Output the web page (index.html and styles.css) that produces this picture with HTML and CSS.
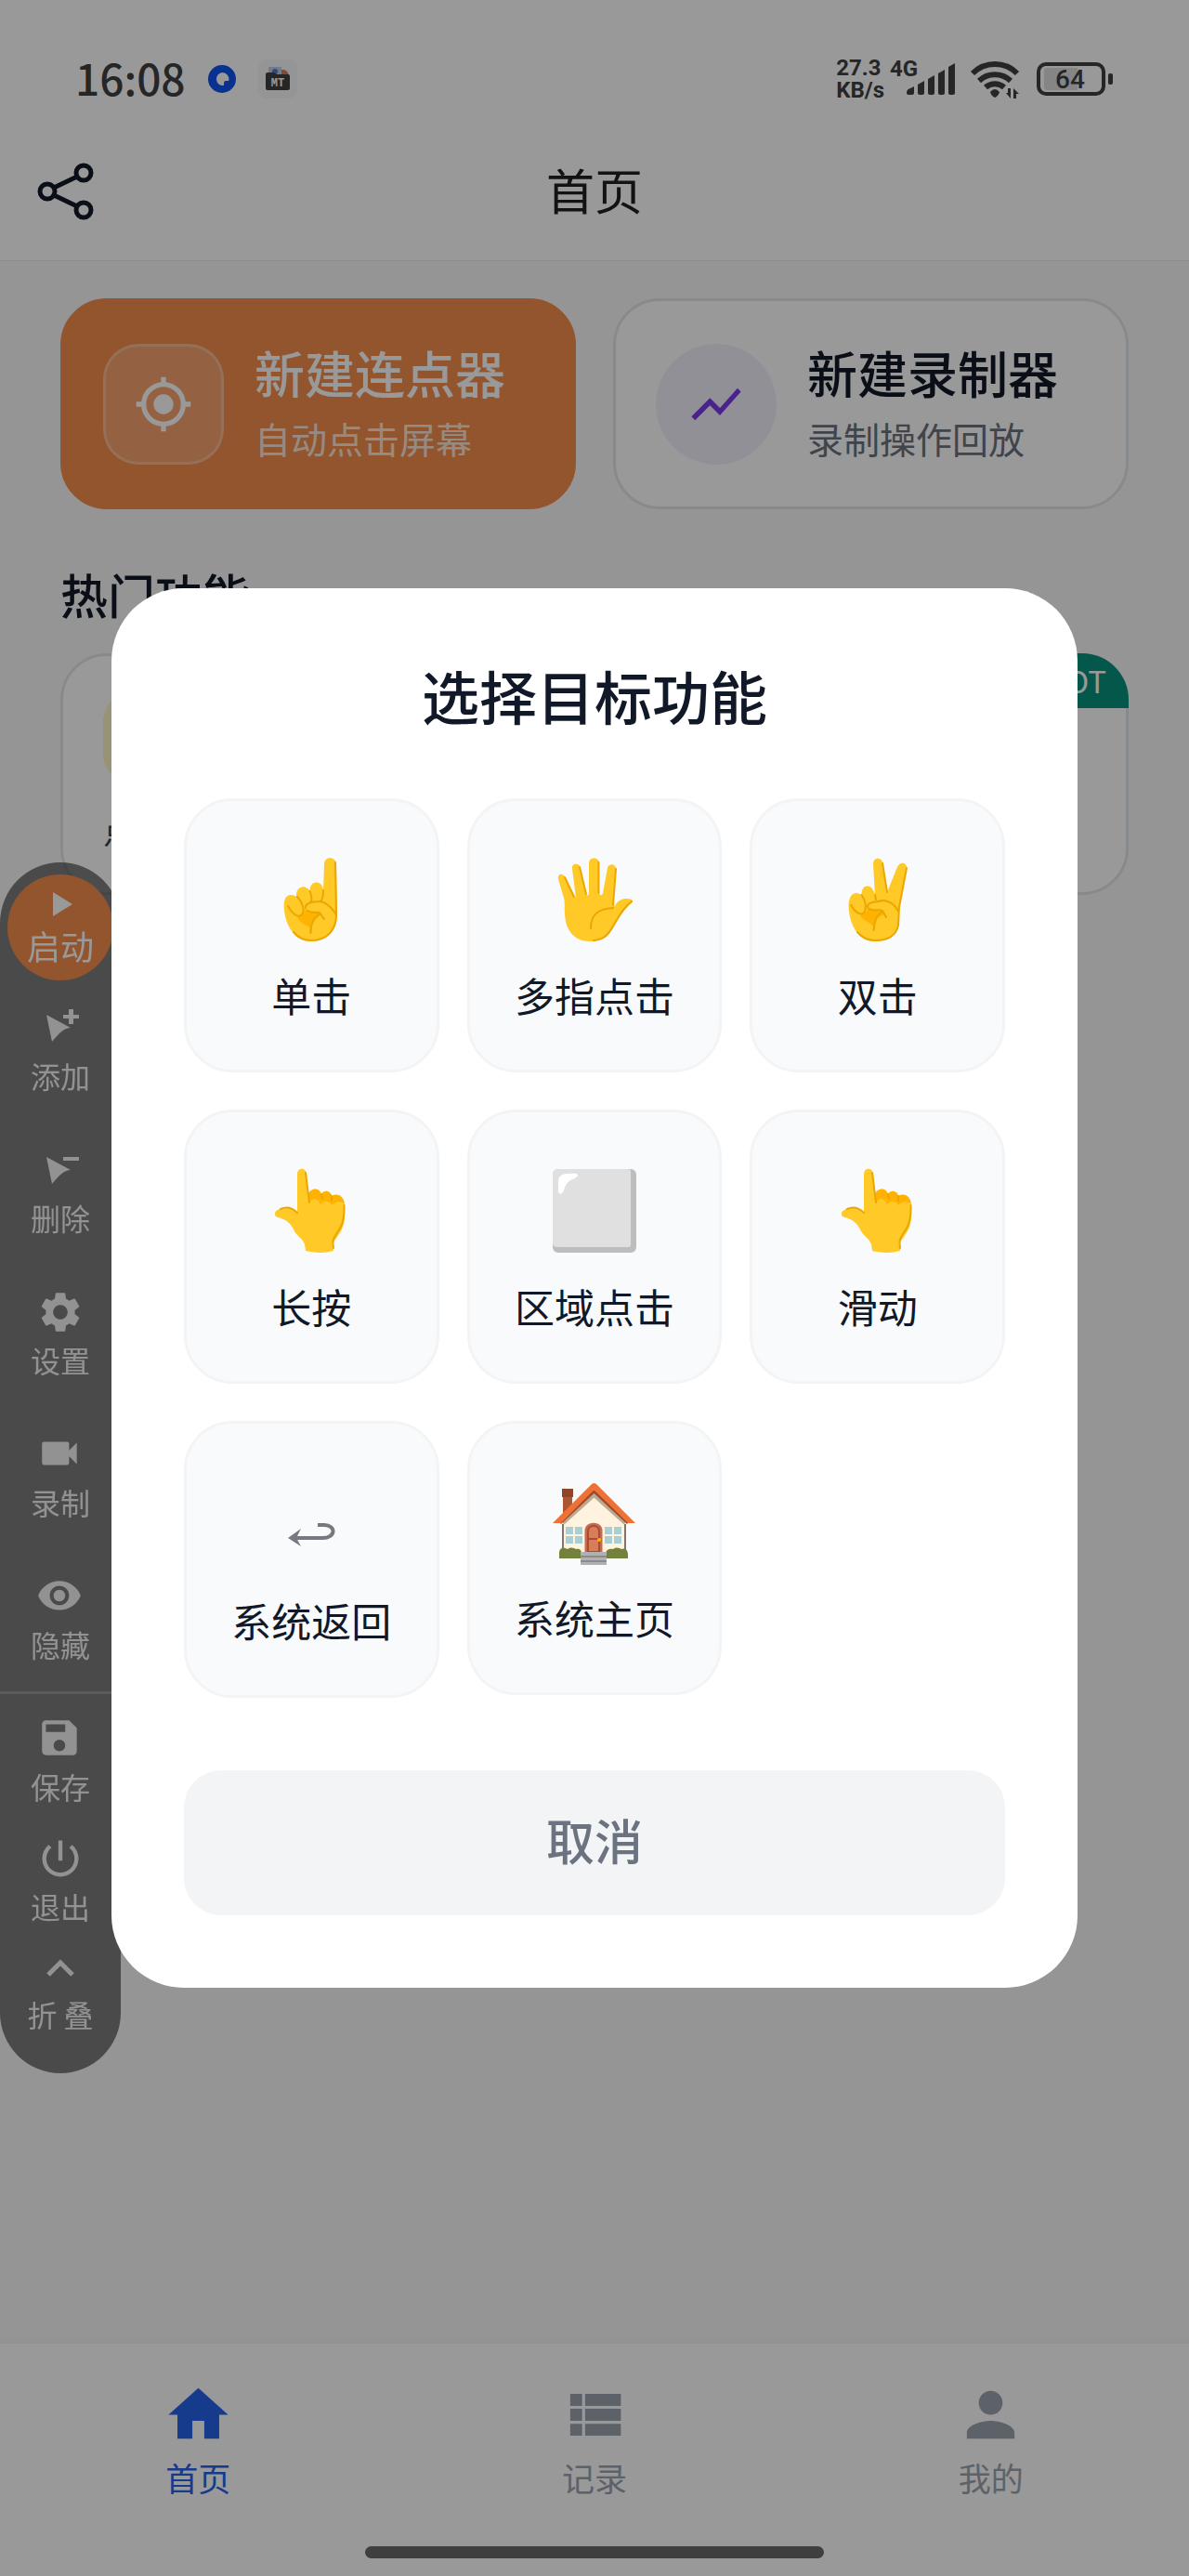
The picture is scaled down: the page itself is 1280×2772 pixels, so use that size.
FILE: index.html
```html
<!DOCTYPE html>
<html lang="zh-CN">

<head>
	<meta charset="utf-8">
	<meta name="viewport" content="width=device-width, initial-scale=1">
	<title>首页</title>
	<link rel="stylesheet" href="styles.css">
</head>

<body>
	<!-- shared drawings -->
	<svg class="sprite" width="0" height="0" aria-hidden="true">
		<symbol id="hand-up" viewBox="0 0 96 96">
			<path fill="#ffc928" d="M33 50V9C33 1 42 1 43 8L46 39C50 33 56 35 58 39C61 35 68 36 70 40C75 37 82 38 84 42V54C84 68 76 75 72 82L72 91C62 94 50 93 42 91L41 84C39 78 33 75 30 70C26 61 21 57 12 55C7 53 8 48 14 46C22 43 28 45 33 50Z" />
			<path fill="#ffb300" d="M46 39L45 31C46 23 57 22 59 30C62 24 70 27 70 32C77 28 84 33 84 42C82 38 75 37 70 42C67 36 61 37 58 41C55 34 49 34 46 40Z" />
			<path fill="none" stroke="#eba600" stroke-width="2" stroke-linecap="round" d="M42 7L46 39M15 46C22 43 28 45 33 50M83.500 42C84 60 80 66 75 73C71 79 71 81 72 88M59 30L60 35M70 32L70 37" />
		</symbol>
		<symbol id="pointer" viewBox="0 0 52 52">
			<path fill="currentColor" d="M11 12L37 26C31 26 25 31 17 41Z" />
		</symbol>
	</svg>

	<div class="page">
		<header class="header">
			<div class="status-bar">
				<div class="status-left">
					<span class="clock">16:08</span>
					<svg width="30" height="30" viewBox="0 0 30 30">
						<circle cx="15" cy="15" r="15" fill="#0f52f0" />
						<path fill="#fff" d="M15 8A7.500 7.500 0 0 1 22.500 16L22 17H19Q17 17 17 20V22A7 7 0 1 1 15 8Z" />
					</svg>
					<svg width="42" height="42" viewBox="0 0 42 42">
						<rect width="42" height="42" rx="9" fill="#f7f9fb" />
						<path fill="#c3cedc" d="M11 8h14v10H11z" />
						<circle cx="18" cy="13" r="3" fill="#5878ce" />
						<path fill="#dd7a50" d="M25 11q7-1 8 7h-8z" />
						<path fill="#404040" d="M8 16q0-2 2-2h7l3 2h12q2 0 2 2v13q0 2-2 2H10q-2 0-2-2z" />
						<text x="21" y="29" text-anchor="middle" class="app-mark">MT</text>
					</svg>
				</div>
				<div class="status-right">
					<div class="network">
						<div class="speed">
							<span>27.3</span>
							<span>KB/s</span>
						</div>
						<svg width="70" height="42" viewBox="0 0 70 42">
							<text x="0" y="18" class="net-type">4G</text>
							<path fill="#404040" d="M18 36q0-4 4-5l4-2v7q0 2-2 2h-4q-2 0-2-2zM30 27l7-4v13q0 2-2 2h-3q-2 0-2-2zM41 21l7-4v19q0 2-2 2h-3q-2 0-2-2zM52 15l7-4v25q0 2-2 2h-3q-2 0-2-2zM63 8l7-4v32q0 2-2 2h-3q-2 0-2-2z" />
						</svg>
					</div>
					<svg width="56" height="42" viewBox="0 0 56 42">
						<g fill="none" stroke="#404040" stroke-width="6">
							<path d="M3 15A34 34 0 0 1 51 15" />
							<path d="M10 23A25 25 0 0 1 44 23" />
							<path d="M17 30A15 15 0 0 1 37 30" />
						</g>
						<path fill="#404040" d="M22 35q5-6 10 0q-1 4-5 6q-4-2-5-6zM41 31h3v11l-5-6h2zM47 42V31l6 6h-3v5z" />
					</svg>
					<svg width="82" height="36" viewBox="0 0 82 36">
						<rect x="2" y="2" width="70" height="32" rx="8" fill="none" stroke="#404040" stroke-width="4" />
						<path fill="#dedede" d="M11 6H44V30H11q-3 0-3-3V9q0-3 3-3z" />
						<rect x="77" y="12" width="5" height="12" rx="2" fill="#404040" />
						<text x="36" y="28" text-anchor="middle" class="battery-level">64</text>
					</svg>
				</div>
			</div>
			<div class="nav-bar">
				<button class="share-button" aria-label="分享">
					<svg width="64" height="64" viewBox="0 0 64 64" fill="none" stroke="#111827" stroke-width="5">
						<circle cx="12" cy="32" r="8" />
						<circle cx="51" cy="12" r="8" />
						<circle cx="51" cy="52" r="8" />
						<path d="M19 28L44 16M19 36L44 48" />
					</svg>
				</button>
				<h1>首页</h1>
			</div>
		</header>

		<main class="content">
			<div class="create-row">
				<button class="create-card primary">
					<span class="create-icon">
						<svg width="64" height="64" viewBox="0 0 24 24" fill="#fff">
							<circle cx="12" cy="12" r="4" />
							<path d="M20.940 11A9 9 0 0 0 13 3.060V1h-2v2.060A9 9 0 0 0 3.060 11H1v2h2.060A9 9 0 0 0 11 20.940V23h2v-2.060A9 9 0 0 0 20.940 13H23v-2zM12 19a7 7 0 1 1 0-14 7 7 0 0 1 0 14z" />
						</svg>
					</span>
					<span class="create-text">
						<span class="create-title">新建连点器</span>
						<span class="create-desc">自动点击屏幕</span>
					</span>
				</button>
				<button class="create-card">
					<span class="create-icon">
						<svg width="64" height="64" viewBox="0 0 24 24" fill="#7c3aed">
							<path d="M3.500 18.490l6-6.010 4 4L22 6.920l-1.410-1.410-7.090 7.970-4-4L2 16.990z" />
						</svg>
					</span>
					<span class="create-text">
						<span class="create-title">新建录制器</span>
						<span class="create-desc">录制操作回放</span>
					</span>
				</button>
			</div>

			<h2>热门功能</h2>
			<div class="hot-row">
				<div class="hot-card">
					<div class="hot-icon"></div>
					<div class="hot-name">点赞</div>
				</div>
				<div class="hot-card">
					<span class="hot-badge">HOT</span>
				</div>
			</div>
		</main>

		<nav class="tab-bar">
			<div class="tabs">
				<a href="#home" class="tab active">
					<svg width="77" height="77" viewBox="0 0 24 24" fill="currentColor"><path d="M10 20v-6h4v6h5v-8h3L12 3 2 12h3v8z" /></svg>
					首页
				</a>
				<a href="#records" class="tab">
					<svg width="77" height="77" viewBox="0 0 24 24" fill="currentColor"><path d="M4 14h4v-4H4v4zm0 5h4v-4H4v4zM4 9h4V5H4v4zm5 5h12v-4H9v4zm0 5h12v-4H9v4zM9 5v4h12V5H9z" /></svg>
					记录
				</a>
				<a href="#mine" class="tab">
					<svg width="77" height="77" viewBox="0 0 24 24" fill="currentColor"><path d="M12 12c2.210 0 4-1.790 4-4s-1.790-4-4-4-4 1.790-4 4 1.790 4 4 4zm0 2c-2.670 0-8 1.340-8 4v2h16v-2c0-2.660-5.330-4-8-4z" /></svg>
					我的
				</a>
			</div>
			<div class="home-indicator"></div>
		</nav>
	</div>

	<!-- floating toolbar -->
	<aside class="toolbar">
		<button class="start-button">
			<svg width="40" height="32" viewBox="0 0 40 32"><path fill="#fff" d="M12 3L33 16L12 29Z" /></svg>
			启动
		</button>
		<div class="tool-group">
			<button class="tool">
				<svg width="52" height="52"><use href="#pointer" /><path fill="currentColor" d="M35 6h5v6h6v4h-6v6h-5v-6h-6v-4h6z" /></svg>
				添加
			</button>
			<button class="tool">
				<svg width="52" height="52"><use href="#pointer" /><path fill="currentColor" d="M29 12h17v4H29z" /></svg>
				删除
			</button>
			<button class="tool">
				<svg width="52" height="52" viewBox="0 0 24 24" fill="currentColor"><path d="M19.140 12.940c.04-.3.06-.61.06-.94 0-.32-.02-.64-.07-.94l2.030-1.580c.18-.14.23-.41.12-.61l-1.920-3.320c-.12-.22-.37-.29-.59-.22l-2.390.96c-.5-.38-1.030-.7-1.620-.94l-.36-2.540c-.04-.24-.24-.41-.48-.41h-3.840c-.24 0-.43.17-.47.41l-.36 2.540c-.59.24-1.130.57-1.620.94l-2.390-.96c-.22-.08-.47 0-.59.22L2.740 8.870c-.12.21-.08.47.12.61l2.030 1.580c-.05.3-.09.63-.09.94s.02.64.07.94l-2.030 1.580c-.18.14-.23.41-.12.61l1.920 3.320c.12.22.37.29.59.22l2.390-.96c.5.38 1.030.7 1.620.94l.36 2.540c.05.24.24.41.48.41h3.840c.24 0 .44-.17.47-.41l.36-2.540c.59-.24 1.130-.56 1.620-.94l2.390.96c.22.08.47 0 .59-.22l1.920-3.320c.12-.22.07-.47-.12-.61l-2.010-1.580zM12 15.600c-1.980 0-3.600-1.620-3.600-3.600s1.620-3.600 3.600-3.600 3.600 1.620 3.600 3.600-1.620 3.600-3.600 3.600z" /></svg>
				设置
			</button>
			<button class="tool">
				<svg width="52" height="52" viewBox="0 0 25 25" fill="currentColor"><path d="M17 10.500V7c0-.55-.45-1-1-1H4c-.55 0-1 .45-1 1v10c0 .55.45 1 1 1h12c.55 0 1-.45 1-1v-3.500l4 4v-11l-4 4z" /></svg>
				录制
			</button>
			<button class="tool">
				<svg width="52" height="52" viewBox="0 0 25 25" fill="currentColor"><path d="M12 4.500C7 4.500 2.730 7.610 1 12c1.730 4.390 6 7.500 11 7.500s9.270-3.110 11-7.500c-1.730-4.390-6-7.500-11-7.500zM12 17c-2.760 0-5-2.240-5-5s2.240-5 5-5 5 2.240 5 5-2.240 5-5 5zm0-8c-1.660 0-3 1.340-3 3s1.340 3 3 3 3-1.340 3-3-1.340-3-3-3z" /></svg>
				隐藏
			</button>
		</div>
		<div class="tool-group compact">
			<button class="tool">
				<svg width="52" height="52" viewBox="0 0 25 25" fill="currentColor"><path fill-rule="evenodd" d="M17 3H5a2 2 0 0 0-2 2v14c0 1.100.9 2 2 2h14a2 2 0 0 0 2-2V7l-4-4zM12 19a3 3 0 1 1 0-6 3 3 0 0 1 0 6zM15 9H5V5h10z" /></svg>
				保存
			</button>
			<button class="tool">
				<svg width="52" height="52" viewBox="0 0 24 24" fill="currentColor"><path d="M13 3h-2v10h2V3zm4.830 2.170l-1.420 1.420A6.920 6.920 0 0 1 19 12c0 3.870-3.130 7-7 7s-7-3.130-7-7c0-2.190 1.010-4.140 2.580-5.420L6.170 5.170A8.930 8.930 0 0 0 3 12a9 9 0 0 0 18 0c0-2.740-1.230-5.180-3.170-6.830z" /></svg>
				退出
			</button>
			<button class="tool fold">
				<svg width="52" height="52" viewBox="0 0 52 52" fill="none" stroke="currentColor" stroke-width="5"><path d="M13 35L26 22L39 35" /></svg>
				折 叠
			</button>
		</div>
	</aside>

	<!-- target picker -->
	<div class="overlay">
		<div class="dialog" role="dialog" aria-modal="true" aria-labelledby="dialog-title">
			<h2 id="dialog-title" class="dialog-title">选择目标功能</h2>
			<div class="options">
				<button class="option">
					<svg width="96" height="96" viewBox="0 0 96 96">
						<path fill="#ffc928" d="M61 40L62 10C62 1 74.500 1 75 10L76 64C76 82 65 93 48 93C28 93 18.700 72 18.700 54C18.700 42 27 41 32 45C31 33 43 31 46.500 39C46 27 60 26 61 38Z" />
						<path fill="#ffb300" d="M33 67C41 64 42 60 42 57C46 62 52 62 58 62L60 64C52 67 49 71 47.500 79C43 75 36 74 33 67Z" />
						<path fill="none" stroke="#eba600" stroke-width="2" stroke-linecap="round" stroke-linejoin="round" d="M23 55C27 62 33 69 38 64C42 60 38 50 33 45M46.500 39C49 44 49 50 47 51M61 38C61 44 60 48 58.500 49M42 57C41 51 52 50 59 50C67 53 73 60 75 65M44 60C49 63 53 61 57 62L62 69M57 64C51 67 47 75 47.500 84M74 8L75 64C75 81 65 92 48 92C40 92 34 89 29 83" />
					</svg>
					单击
				</button>
				<button class="option">
					<svg width="96" height="96" viewBox="0 0 96 96">
						<path fill="#ffc928" d="M9 26C8 20 14 19 16 24L26 45C28 46 28 45 27.500 42L24 15C23 9 31 8 32.500 13L39 42C40 44 42 44 42 41V9C42 2 52 2 53 8V41C54 44 56 44 57 41L62 14C63 9 71 9 71 15L68 51C68 55 69 57 71 53C75 47 83 46 88 48C90 50 88 52 85 54C76 61 72 72 65 83C60 91 53 93 43 93C27 93 18 82 16.500 68C15 58 17 50 14 43Z" />
						<path fill="none" stroke="#eba600" stroke-width="2" stroke-linecap="round" d="M68 57C51 58 44 65 44 79M16 24L26 45M32 13L39 42M52.500 8V41M71 15L68 54M88 50C79 57 75 65 69 75C62 88 56 91 47 92" />
					</svg>
					多指点击
				</button>
				<button class="option">
					<svg width="96" height="96" viewBox="0 0 96 96">
						<path fill="#ffc928" d="M45 43L43 10C43 2 52 2 53.500 9L58 40L69 13C72 6 80 8 79 15L71 56L70 76C67 89 57 93 45 93C26 93 16.600 73 16.600 54C17 40 25 39 30.500 43C30 31 42 30 45 43Z" />
						<path fill="#ffb300" d="M29 65C37 63 38 57 37 55C42 60 48 58 52 60L55 64C48 66 45 70 44 78C40 72 32 71 29 65Z" />
						<path fill="none" stroke="#eba600" stroke-width="2" stroke-linecap="round" stroke-linejoin="round" d="M19 54C23 61 30 67 34 61C36 55 34 48 30.500 43M45 43L46 48M37 56C36 50 47 51 53 49C61 49 68 55 70 61M38 58C43 61 49 58 53 60L57 67M53 61C46 65 44 72 43.500 81M53 9L58 40M79 14L71 56L70 76C67 89 57 92 45 92C37 92 31 89 26 83" />
					</svg>
					双击
				</button>
				<button class="option">
					<svg width="96" height="96"><use href="#hand-up" /></svg>
					长按
				</button>
				<button class="option">
					<svg width="96" height="96" viewBox="0 0 96 96">
						<rect x="3" y="3" width="90" height="90" rx="6" fill="#bdbdbd" />
						<path fill="#e0e0e0" d="M9 3H84q3 0 3 3V84q0 3-3 3H9q-6 0-6-4V9q0-6 6-6z" />
						<path fill="#fff" d="M9 17C9 10 13 8 20 8C30 7 33 9 27 13C18 16 17 20 15 26C12 32 9 30 9 26Z" />
					</svg>
					区域点击
				</button>
				<button class="option">
					<svg width="96" height="96"><use href="#hand-up" /></svg>
					滑动
				</button>
				<button class="option">
					<svg width="96" height="99" viewBox="0 0 96 99">
						<path fill="none" stroke="#767980" stroke-width="4" d="M31 65H60C75 65 75 51 62 51H55" />
						<path fill="#767980" d="M23 65L37 55L32 65L37 74Z" />
					</svg>
					系统返回
				</button>
				<button class="option">
					<svg width="96" height="96" viewBox="0 0 96 96">
						<path fill="#ad5631" d="M14 20h10v20H14z" />
						<path fill="#8f4527" d="M13 12h12v9H13z" />
						<path fill="#fff3e0" d="M14 46L47.500 16L81 46V84H14z" />
						<path fill="none" stroke="#bcaa92" stroke-width="4" d="M14 49L47.500 19L81 49" />
						<path fill="none" stroke="#a14b2b" stroke-width="3" d="M11 49L47.500 15L84 49" />
						<path fill="#ef7136" d="M3 49L44 8q3.500-4 7 0L92 49H84L47.500 13L12 49z" />
						<path stroke="#85736b" stroke-width="2" d="M14 50V80M81 50V80" />
						<path fill="#a8cfd4" d="M17 53h8v8h-8zM27 53h8v8h-8zM17 63h8v8h-8zM27 63h8v8h-8zM59 53h8v8h-8zM69 53h8v8h-8zM59 63h8v8h-8zM69 63h8v8h-8z" />
						<path fill="#c56a4c" d="M37.500 81V57C37.500 46 56.500 46 56.500 57V81z" />
						<path fill="#d87d58" stroke="#a94c32" stroke-width="2" d="M41 80V58C41 50 53 50 53 58V80zM41 66H53" />
						<circle cx="53" cy="67" r="2" fill="#ffb300" />
						<path fill="#72823a" d="M10 87V80C11 74 17 76 19 77C23 74 26 76 28 77C33 76 34 79 34 82V87zM60 87V82C60 77 65 76 68 77C72 74 75 76 77 77C82 75 84 79 84 83V87z" />
						<path fill="#b0b0b0" d="M33 80h28v14H33z" />
						<path stroke="#8b8b8b" stroke-width="2" d="M33 85h28M33 90h28" />
					</svg>
					系统主页
				</button>
			</div>
			<button class="cancel-button">取消</button>
		</div>
	</div>
</body>

</html>
```
FILE: styles.css
```css
* {
	box-sizing: border-box;
}

body {
	margin: 0;
	background-color: #f9f9f9;
	color: #111827;
	font-family: "Noto Sans CJK SC", "Noto Sans", sans-serif;
}

h1,
h2 {
	margin: 0;
	font-weight: 500;
}

button {
	margin: 0;
	padding: 0;
	border: none;
	background: none;
	color: inherit;
	font-family: inherit;
	cursor: pointer;
}

svg {
	display: block;
	flex-shrink: 0;
	overflow: visible;
}

.sprite {
	position: absolute;
}

.page {
	display: flex;
	flex-direction: column;
	min-height: 100vh;
}

/* header */
.header {
	background-color: #fff;
	border-bottom: 1px solid #ececec;
}

.status-bar {
	display: flex;
	align-items: center;
	justify-content: space-between;
	height: 132px;
	padding: 38px 82px 0 81px;
	color: #404040;
}

.status-left {
	display: flex;
	align-items: center;
	gap: 24px;
}

.clock {
	padding-bottom: 4px;
	font-size: 46px;
	font-weight: 500;
	line-height: 60px;
}

.app-mark {
	font: bold 12px "Liberation Mono", monospace;
	fill: #fff;
}

.status-right {
	display: flex;
	align-items: center;
	gap: 16px;
}

.network {
	display: flex;
	align-items: center;
	gap: 6px;
}

.speed {
	display: flex;
	flex-direction: column;
	font-family: Roboto, sans-serif;
	font-size: 24px;
	font-weight: 700;
	line-height: 24px;
}

.net-type {
	font-family: Roboto, sans-serif;
	font-size: 24px;
	font-weight: 700;
	fill: #404040;
}

.battery-level {
	font-family: Roboto, sans-serif;
	font-size: 28px;
	font-weight: 500;
	fill: #404040;
}

.nav-bar {
	display: grid;
	grid-template-columns: 64px 1fr 64px;
	align-items: center;
	height: 148px;
	padding: 0 39px;
}

.nav-bar h1 {
	padding-bottom: 4px;
	font-size: 52px;
	line-height: 72px;
	font-weight: 400;
	text-align: center;
	color: #202020;
}

/* content */
.content {
	flex: 1;
	padding: 40px 65px;
}

.create-row,
.hot-row {
	display: grid;
	grid-template-columns: 1fr 1fr;
	gap: 40px;
}

.create-card {
	display: flex;
	align-items: center;
	gap: 33px;
	padding: 38px 43px;
	border: 3px solid #e2e6ec;
	border-radius: 50px;
	background-color: #fff;
	text-align: left;
}

.create-icon {
	display: flex;
	align-items: center;
	justify-content: center;
	width: 130px;
	height: 130px;
	border-radius: 65px;
	background-color: #f4f1fc;
}

.create-text {
	display: flex;
	flex-direction: column;
	padding-bottom: 5px;
}

.create-title {
	font-size: 54px;
	font-weight: 500;
	line-height: 78px;
}

.create-desc {
	font-size: 39px;
	line-height: 62px;
	color: #6b7280;
}

.create-card.primary {
	border-color: #f58e4b;
	background-color: #f58e4b;
	color: #fff;
}

.primary .create-icon {
	border: 3px solid rgba(255, 255, 255, 0.25);
	border-radius: 38px;
	background-color: rgba(255, 255, 255, 0.2);
}

.primary .create-desc {
	color: rgba(255, 255, 255, 0.8);
}

.content h2 {
	margin: 61px 0 34px;
	font-size: 51px;
	line-height: 60px;
}

.hot-card {
	position: relative;
	min-height: 260px;
	padding: 40px 43px;
	border: 3px solid #e2e6ec;
	border-radius: 50px;
	background-color: #fff;
}

.hot-icon {
	width: 96px;
	height: 96px;
	border-radius: 30px;
	background-color: #fef3c7;
}

.hot-name {
	margin-top: 26px;
	font-size: 36px;
	line-height: 48px;
	color: #374151;
}

.hot-badge {
	position: absolute;
	top: -3px;
	right: -3px;
	padding: 0 24px;
	border-radius: 0 50px 0 30px;
	background-color: #08937d;
	color: #fff;
	font-size: 33px;
	line-height: 59px;
}

/* bottom tabs */
.tab-bar {
	background-color: #fff;
	border-top: 1px solid #f1f1f1;
	box-shadow: 0 -2px 8px rgba(0, 0, 0, 0.03);
}

.tabs {
	display: grid;
	grid-template-columns: repeat(3, 1fr);
	padding: 38px 0 51px;
}

.tab {
	display: flex;
	flex-direction: column;
	align-items: center;
	gap: 6px;
	font-size: 35px;
	line-height: 46px;
	color: #9ca3af;
	text-decoration: none;
}

.tab.active {
	color: #2563eb;
}

.home-indicator {
	width: 494px;
	height: 13px;
	margin: 0 auto 19px;
	border-radius: 7px;
	background-color: #696969;
}

/* floating toolbar */
.toolbar {
	position: fixed;
	top: 928px;
	left: 0;
	width: 130px;
	padding: 13px 0 38px;
	border-radius: 65px;
	background-color: rgba(0, 0, 0, 0.5);
	color: #fff;
}

.start-button {
	display: flex;
	flex-direction: column;
	align-items: center;
	width: 114px;
	height: 114px;
	margin: 0 auto;
	padding-top: 16px;
	border-radius: 50%;
	background-color: #f58e4b;
	color: #fff;
	font-size: 36px;
	line-height: 56px;
}

.tool {
	display: flex;
	flex-direction: column;
	align-items: center;
	gap: 2px;
	width: 100%;
	padding: 25px 0 28px;
	font-size: 32px;
	line-height: 46px;
	color: #f4f4f4;
}

.compact {
	padding-top: 9px;
	border-top: 3px solid rgba(255, 255, 255, 0.2);
}

.compact .tool {
	padding: 13px 0 16px;
}

.compact .fold {
	padding: 0 0 3px;
}

/* dialog */
.overlay {
	position: fixed;
	inset: 0;
	display: flex;
	align-items: center;
	justify-content: center;
	padding: 0 120px;
	background-color: rgba(0, 0, 0, 0.4);
}

.dialog {
	width: 100%;
	padding: 74px 78px 78px;
	border-radius: 78px;
	background-color: #fff;
}

.dialog-title {
	margin-bottom: 70px;
	font-size: 62px;
	line-height: 82px;
	text-align: center;
}

.options {
	display: grid;
	grid-template-columns: repeat(3, 1fr);
	align-items: start;
	gap: 40px 30px;
}

.option {
	display: flex;
	flex-direction: column;
	align-items: center;
	gap: 25px;
	padding: 58px 0 52px;
	border: 3px solid #f3f4f6;
	border-radius: 52px;
	background-color: #f9fafc;
	font-size: 43px;
	font-weight: 400;
	line-height: 58px;
}

.cancel-button {
	width: 100%;
	margin-top: 78px;
	padding: 37px 0 43px;
	border-radius: 40px;
	background-color: #f3f4f6;
	color: #6b7280;
	font-size: 52px;
	font-weight: 500;
	line-height: 76px;
}
```
